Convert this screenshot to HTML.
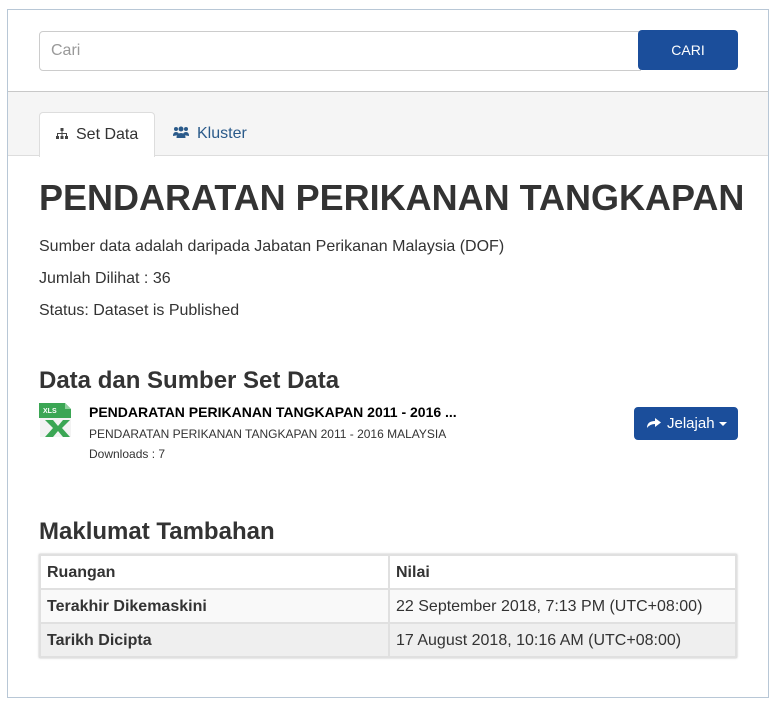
<!DOCTYPE html>
<html><head><meta charset="utf-8"><style>
*{box-sizing:border-box;margin:0;padding:0}
body{width:781px;height:710px;background:#fff;font-family:"Liberation Sans",Arial,sans-serif;color:#333;position:relative;overflow:hidden}
.frame{position:absolute;left:7px;top:9px;width:762px;height:689px;border:1px solid #b8c7d6}
.abs{position:absolute}
.input{left:39px;top:31px;width:602px;height:40px;border:1px solid #ccc;border-radius:4px 0 0 4px;font-size:16px;color:#999;padding:10px 11px}
.btn{left:638px;top:30px;width:100px;height:40px;background:#1b4e9b;border-radius:4px;color:#fff;font-size:14px;text-align:center;line-height:40px}
.gray{left:8px;top:91px;width:760px;height:65px;background:#f5f5f5;border-top:1px solid #c8c8c8;border-bottom:1px solid #ddd}
.tab1{left:39px;top:112px;width:116px;height:45px;background:#fff;border:1px solid #ddd;border-bottom:none;border-radius:4px 4px 0 0;font-size:16px;line-height:44px;padding-left:16px}
.tab2{left:173px;top:112px;font-size:16px;line-height:44px;color:#2a5a8a}
h1{position:absolute;left:39px;top:177px;font-size:36px;font-weight:bold;color:#333;white-space:nowrap}
.p{position:absolute;left:39px;font-size:16px}
h2{position:absolute;left:39px;font-size:24px;font-weight:bold;color:#333}
table{position:absolute;left:39px;top:554px;width:698px;border-collapse:collapse;font-size:16px;box-shadow:0 0 2px #bbb}
td{border:2px solid #e0e0e0;height:34px;padding:1px 6px 0}
</style></head><body>
<div class="frame"></div>
<div class="abs input">Cari</div>
<div class="abs btn">CARI</div>
<div class="abs gray"></div>
<div class="abs tab1"><svg width="12" height="11" viewBox="0 0 12 11" style="margin-right:8px"><rect x="4.5" y="0" width="3" height="3" fill="#444"/><rect x="5.5" y="3" width="1" height="2" fill="#444"/><rect x="1" y="5" width="10" height="1" fill="#444"/><rect x="1" y="5" width="1" height="3" fill="#444"/><rect x="10" y="5" width="1" height="3" fill="#444"/><rect x="5.5" y="5" width="1" height="3" fill="#444"/><rect x="0" y="8" width="3" height="3" fill="#444"/><rect x="4.5" y="8" width="3" height="3" fill="#444"/><rect x="9" y="8" width="3" height="3" fill="#444"/></svg>Set Data</div>
<div class="abs tab2"><svg width="16" height="12" viewBox="0 0 16 12" style="margin-right:8px"><circle cx="3" cy="3" r="2" fill="#2a5a8a"/><circle cx="13" cy="3" r="2" fill="#2a5a8a"/><circle cx="8" cy="3" r="2.5" fill="#2a5a8a"/><path d="M0 10q0-4 3-4t3 3zM16 10q0-4-3-4t-3 3z" fill="#2a5a8a"/><path d="M3.5 12q0-5 4.5-5t4.5 5z" fill="#2a5a8a"/></svg>Kluster</div>
<h1>PENDARATAN PERIKANAN TANGKAPAN</h1>
<div class="p" style="top:238px">Sumber data adalah daripada Jabatan Perikanan Malaysia (DOF)</div>
<div class="p" style="top:270px">Jumlah Dilihat : 36</div>
<div class="p" style="top:302px">Status: Dataset is Published</div>
<h2 style="top:367px">Data dan Sumber Set Data</h2>
<svg class="abs" style="left:39px;top:403px" width="33" height="34" viewBox="0 0 33 34"><path d="M1 0h25l6 6v28H1z" fill="#f3f3f3"/><path d="M0 0h26l6 6v9H0z" fill="#3ba654"/><path d="M26 0v6h6z" fill="#8fd19e"/><text x="4" y="10" font-size="7" font-weight="bold" fill="#fff" font-family="Liberation Sans">XLS</text><path d="M6 17h8l5 6 5-6h7l-8 8 8 9h-7l-5-6-5 6H6l8-9z" fill="#3ba654"/></svg>
<div class="abs" style="left:89px;top:404px;font-size:14px;font-weight:bold;color:#000;white-space:nowrap">PENDARATAN PERIKANAN TANGKAPAN 2011 - 2016 ...</div>
<div class="abs" style="left:89px;top:427px;font-size:12px;color:#333;white-space:nowrap">PENDARATAN PERIKANAN TANGKAPAN 2011 - 2016 MALAYSIA</div>
<div class="abs" style="left:89px;top:447px;font-size:12px;color:#333">Downloads : 7</div>
<div class="abs" style="left:634px;top:407px;width:104px;height:33px;background:#1b4e9b;border-radius:4px;color:#fff;font-size:15px;line-height:33px;padding-left:13px;white-space:nowrap"><svg width="14" height="11" viewBox="0 0 14 11" style="margin-right:6px"><path d="M0 11q0-7 8-7V1l6 4.5L8 10V7q-5 0-8 4z" fill="#fff"/></svg>Jelajah <span style="display:inline-block;border-left:4px solid transparent;border-right:4px solid transparent;border-top:4px solid #fff;vertical-align:middle"></span></div>
<h2 style="top:518px">Maklumat Tambahan</h2>
<table>
<tr><td style="width:349px;font-weight:bold;background:#fff">Ruangan</td><td style="font-weight:bold;background:#fff">Nilai</td></tr>
<tr style="background:#f9f9f9"><td style="font-weight:bold">Terakhir Dikemaskini</td><td>22 September 2018, 7:13 PM (UTC+08:00)</td></tr>
<tr style="background:#efefef"><td style="font-weight:bold">Tarikh Dicipta</td><td>17 August 2018, 10:16 AM (UTC+08:00)</td></tr>
</table>
</body></html>
